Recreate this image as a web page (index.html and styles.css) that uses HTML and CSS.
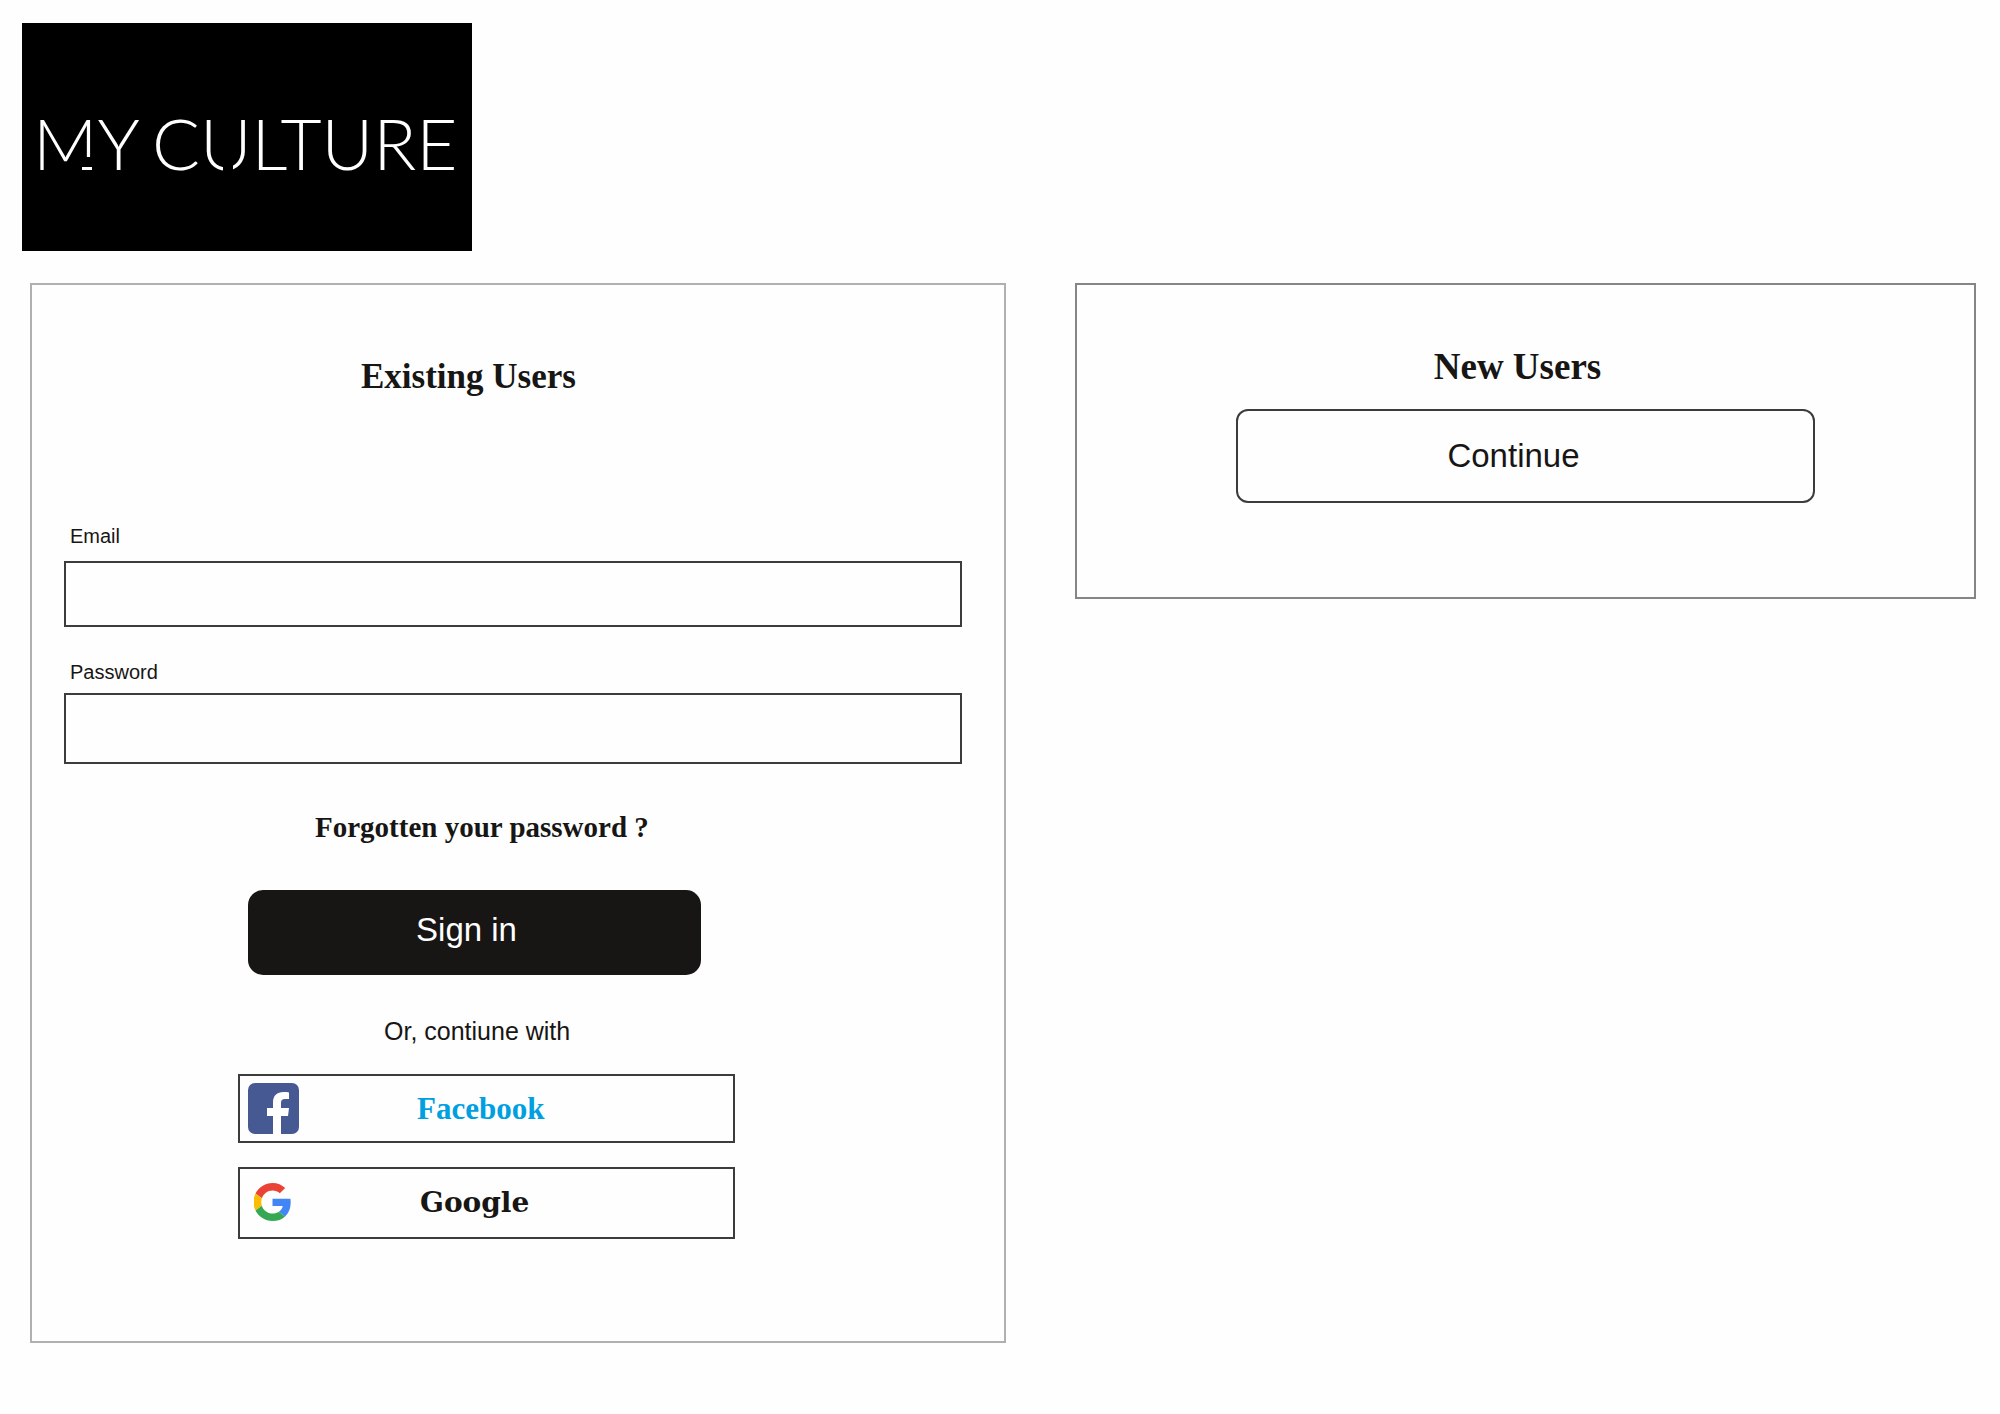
FILE: index.html
```html
<!DOCTYPE html>
<html lang="en">
<head>
  <meta charset="utf-8">
  <meta name="viewport" content="width=device-width, initial-scale=1">
  <title>My Culture – Sign in</title>
  <link rel="stylesheet" href="styles.css">
</head>
<body>
  <header class="site-header">
    <svg class="logo" viewBox="0 0 450 228" role="img" aria-label="My Culture">
      <rect width="450" height="228" fill="#000"/>
      <text class="logo-text" x="11" y="147">MY</text>
      <text class="logo-text" x="130" y="147">CULTURE</text>
      <!-- cut foot of the M with its dash, and the open bowl of the first U -->
      <rect x="58" y="134" width="16" height="14" fill="#000"/>
      <rect x="60" y="144" width="10" height="3" fill="#fff"/>
      <rect x="201" y="138" width="10" height="12" fill="#000"/>
    </svg>
  </header>

  <main class="panels">
    <section class="panel panel-existing">
      <h1 class="title title-existing">Existing Users</h1>
      <form class="login">
        <label class="label" for="email">Email</label>
        <input class="field field-email" id="email" type="email">
        <label class="label" for="password">Password</label>
        <input class="field field-password" id="password" type="password">
        <a class="forgot" href="#">Forgotten your password ?</a>
        <button class="sign-in" type="submit">Sign in</button>
      </form>
      <p class="or">Or, contiune with</p>
      <div class="social">
        <button class="social-button facebook" type="button">
          <svg class="facebook-icon" viewBox="0 0 51 51" aria-hidden="true">
            <rect width="51" height="51" rx="7" fill="#475993"/>
            <path d="M25 51V33h-6v-8h6v-5.500C25 12.500 29 9 35.500 9c2.500 0 4 .100 5.500 .400V16h-4c-3 0-4 1.500-4 4v5h8l-1 8h-7v18z" fill="#fff"/>
          </svg>
          <span>Facebook</span>
        </button>
        <button class="social-button google" type="button">
          <svg class="google-icon" viewBox="1 0 46 48" aria-hidden="true">
            <path fill="#EA4335" d="M24 9.500c3.540 0 6.710 1.220 9.210 3.600l6.850-6.850C35.900 2.380 30.470 0 24 0 14.620 0 6.510 5.380 2.560 13.220l7.980 6.190C12.430 13.720 17.740 9.500 24 9.500z"/>
            <path fill="#4285F4" d="M46.980 24.550c0-1.570-.150-3.090-.380-4.550H24v9.020h12.940c-.580 2.960-2.260 5.480-4.780 7.180l7.730 6c4.510-4.180 7.090-10.360 7.090-17.650z"/>
            <path fill="#FBBC05" d="M10.530 28.590c-.480-1.450-.760-2.990-.760-4.590s.270-3.140.760-4.590l-7.980-6.190C.920 16.460 0 20.120 0 24c0 3.880.920 7.540 2.560 10.780l7.970-6.190z"/>
            <path fill="#34A853" d="M24 48c6.480 0 11.930-2.130 15.890-5.810l-7.730-6c-2.150 1.450-4.920 2.300-8.160 2.300-6.260 0-11.570-4.220-13.470-9.910l-7.980 6.190C6.510 42.620 14.620 48 24 48z"/>
          </svg>
          <span>Google</span>
        </button>
      </div>
    </section>

    <section class="panel panel-new">
      <h2 class="title title-new">New Users</h2>
      <button class="continue" type="button">Continue</button>
    </section>
  </main>
</body>
</html>
```
FILE: styles.css
```css
* {
  box-sizing: border-box;
}

body {
  margin: 0;
  background: #fefefe;
  color: #171614;
  font-family: "Liberation Sans", Arial, sans-serif;
}

button {
  font-family: inherit;
  color: inherit;
  cursor: pointer;
}

.site-header {
  padding: 23px 22px 32px;
}

.logo {
  display: block;
  width: 450px;
  max-width: 100%;
}

.logo-text {
  fill: #fff;
  font-family: Lato, sans-serif;
  font-size: 71px;
  font-weight: 300;
}

.panels {
  display: grid;
  grid-template-columns: 976fr 901fr;
  align-items: start;
  gap: 69px;
  padding: 0 24px 70px 30px;
}

.panel {
  border: 2px solid #b0b0b0;
}

.panel-existing {
  padding: 72px 42px 102px 32px;
}

.panel-new {
  display: flex;
  flex-direction: column;
  align-items: center;
  padding: 62px 40px 94px;
  border-color: #858585;
}

.title,
.forgot,
.social-button {
  font-family: "Liberation Serif", "Times New Roman", serif;
  font-weight: 700;
}

.title {
  margin: 0;
  line-height: 40px;
}

.title-existing {
  margin-left: 297px;
  font-size: 35px;
}

.title-new {
  padding-right: 16px;
  font-size: 37px;
}

.login {
  display: flex;
  flex-direction: column;
  align-items: flex-start;
  padding-top: 127px;
}

.label {
  padding-left: 6px;
  font-size: 20px;
  line-height: 24px;
}

.field {
  width: 100%;
  padding: 0 16px;
  border: 2px solid #3c3c3c;
  border-radius: 0;
  background: transparent;
  font: 24px "Liberation Sans", Arial, sans-serif;
}

.field-email {
  height: 66px;
  margin: 13px 0 33px;
}

.field-password {
  height: 71px;
  margin: 9px 0 47px;
}

.forgot {
  margin-left: 251px;
  color: inherit;
  font-size: 29px;
  line-height: 32px;
  text-decoration: none;
}

.sign-in {
  width: 453px;
  height: 85px;
  margin: 47px 0 40px 184px;
  padding: 0 16px 6px 0;
  border: 0;
  border-radius: 15px;
  background: #171614;
  color: #fff;
  font-size: 33px;
}

.or {
  margin: 0 0 27px 320px;
  font-size: 25px;
  line-height: 32px;
}

.social {
  display: grid;
  gap: 24px;
  width: 497px;
  margin-left: 174px;
}

.social-button {
  display: flex;
  align-items: center;
  border: 2px solid #3c3c3c;
  background: transparent;
}

.facebook {
  height: 69px;
  gap: 118px;
  padding: 0 8px;
  color: #00a0e0;
  font-size: 31px;
}

.google {
  height: 72px;
  gap: 129px;
  padding: 0 14px 2px;
  font-family: "DejaVu Serif", serif;
  font-size: 28px;
}

.facebook-icon {
  width: 51px;
  height: 51px;
}

.google-icon {
  width: 37px;
  height: 38px;
}

.continue {
  width: 579px;
  max-width: 100%;
  height: 94px;
  margin-top: 22px;
  padding: 0 24px 0 0;
  border: 2px solid #3c3c3c;
  border-radius: 12px;
  background: transparent;
  font-size: 33px;
}
```
